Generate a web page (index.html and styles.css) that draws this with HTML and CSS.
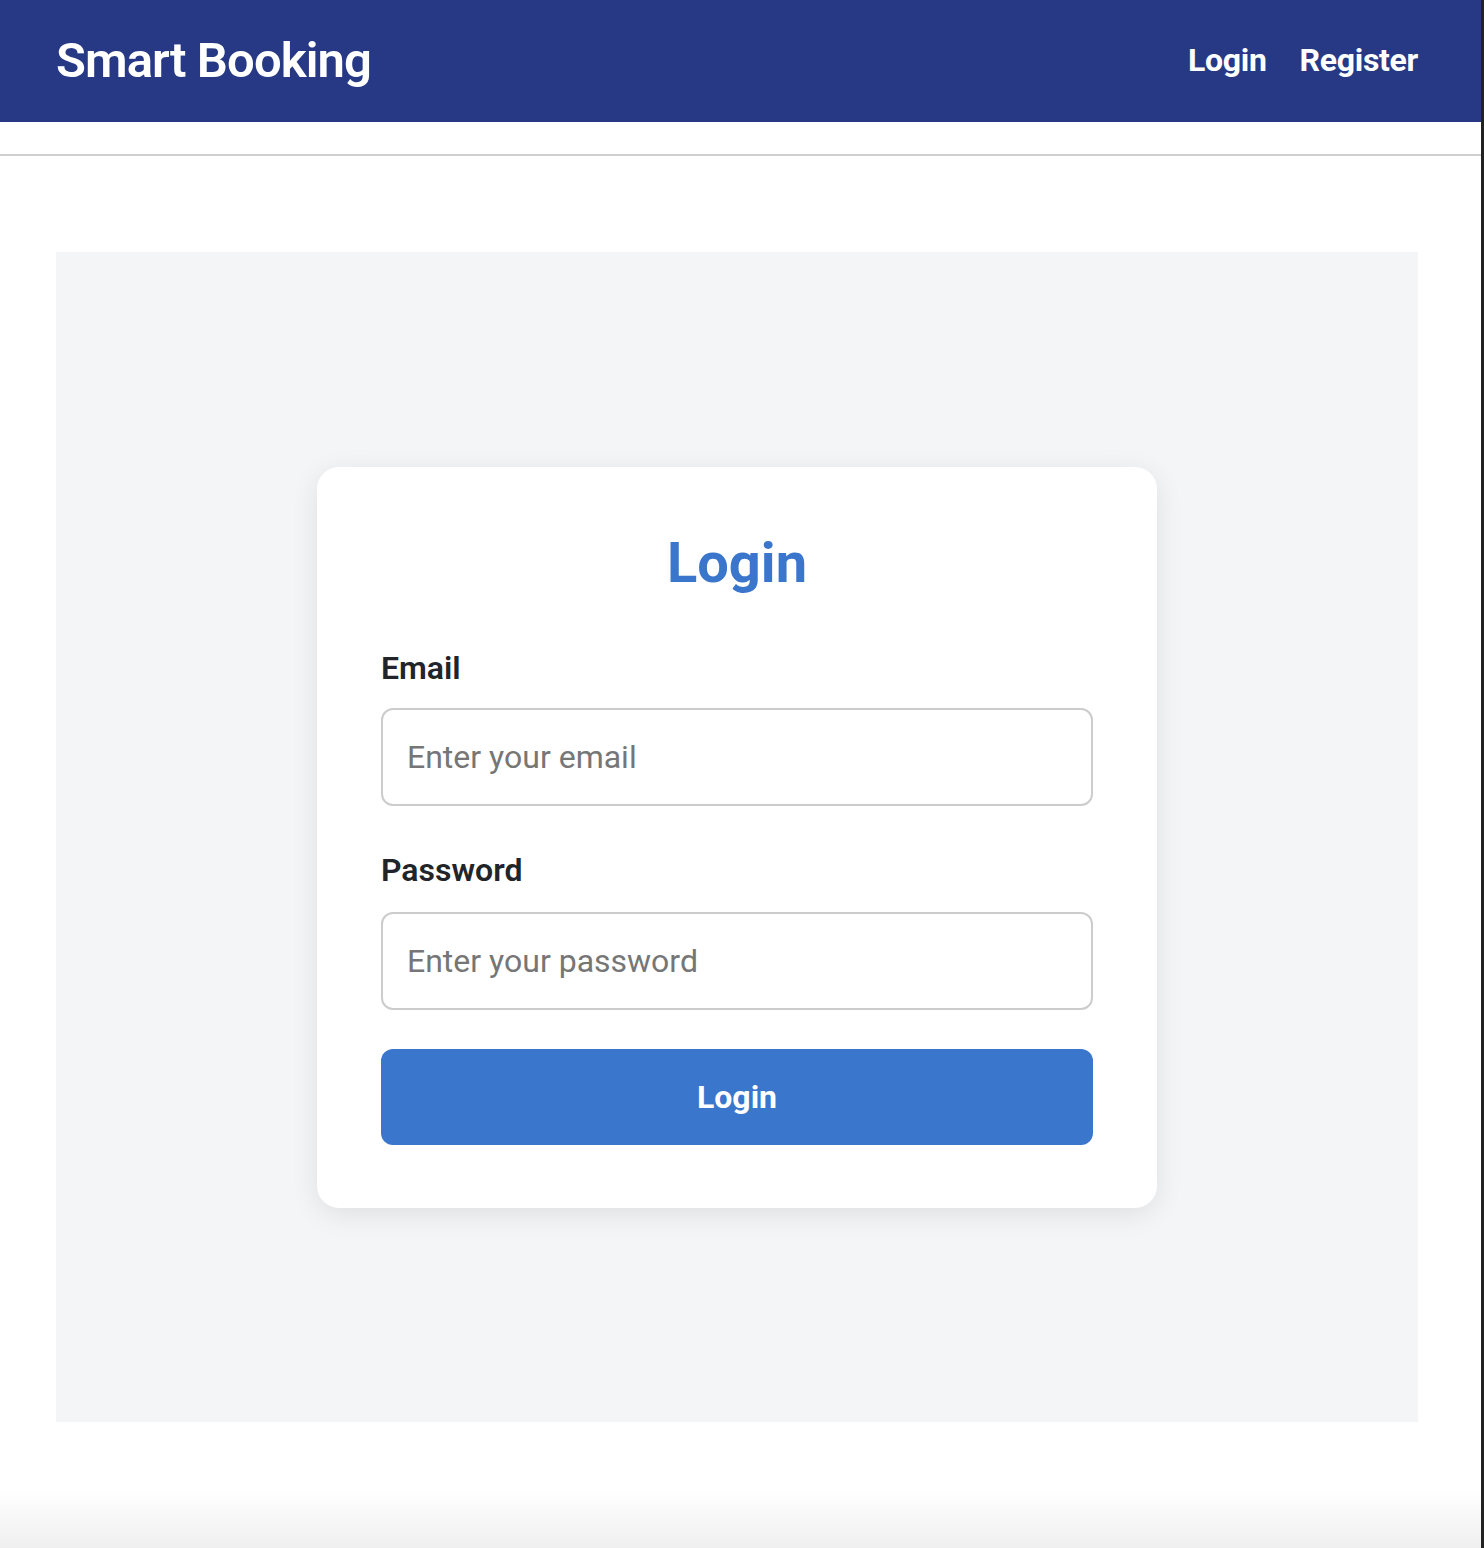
FILE: index.html
```html
<!DOCTYPE html>
<html lang="en">
<head>
<meta charset="utf-8">
<title>Smart Booking - Login</title>
<link rel="stylesheet" href="styles.css">
</head>
<body>
<div class="page">
  <header class="topbar">
    <div class="brand">Smart Booking</div>
    <nav class="nav">
      <a href="#" class="nav-link">Login</a>
      <a href="#" class="nav-link">Register</a>
    </nav>
  </header>
  <hr class="divider">
  <main class="panel">
    <div class="card">
      <h2 class="card-title">Login</h2>
      <form class="form">
        <label class="label" for="email">Email</label>
        <input class="input" id="email" type="email" placeholder="Enter your email">
        <label class="label label-second" for="password">Password</label>
        <input class="input" id="password" type="password" placeholder="Enter your password">
        <button type="button" class="btn">Login</button>
      </form>
    </div>
  </main>
</div>
</body>
</html>
```

FILE: styles.css
```css
* { box-sizing: border-box; }

html, body {
  margin: 0;
  padding: 0;
}

body {
  font-family: Roboto, "Liberation Sans", Arial, sans-serif;
  background: #fff;
  width: 1484px;
  height: 1548px;
  overflow: hidden;
}

.page {
  width: 1484px;
  height: 1548px;
  border-right: 3px solid #222;
  background: linear-gradient(to bottom, #fff 0, #fff 1490px, #efefef 1548px);
}

.topbar {
  height: 122px;
  background: #273985;
  display: flex;
  align-items: center;
  justify-content: space-between;
  padding: 0 63px 0 56px;
}

.brand {
  color: #fff;
  font-size: 49px;
  font-weight: 600;
  letter-spacing: -0.9px;
  margin-top: -2px;
}

.nav {
  display: flex;
  gap: 33px;
  margin-top: -2px;
}

.nav-link {
  color: #fff;
  text-decoration: none;
  font-size: 32px;
  font-weight: 700;
  letter-spacing: -0.3px;
}

.divider {
  margin: 32px 0 0 0;
  border: 0;
  height: 2px;
  background: #cfcfcf;
}

.panel {
  margin: 96px 63px 0 56px;
  height: 1170px;
  background: #f4f5f7;
  display: flex;
  align-items: center;
  justify-content: center;
}

.card {
  width: 840px;
  background: #fff;
  border-radius: 22px;
  padding: 62px 64px 63px;
  box-shadow: 0 6px 28px rgba(0, 0, 0, 0.09);
}

.card-title {
  margin: 0;
  text-align: center;
  color: #3a76cc;
  font-size: 56px;
  font-weight: 700;
  line-height: 68px;
}

.form {
  display: flex;
  flex-direction: column;
  margin-top: 52px;
}

.label {
  font-size: 32px;
  font-weight: 600;
  color: #212529;
  line-height: 38px;
  margin-bottom: 21px;
}

.label-second {
  margin-top: 45px;
  margin-bottom: 23px;
}

.input {
  height: 98px;
  border: 2px solid #cccccc;
  border-radius: 12px;
  padding: 0 24px;
  font-family: Roboto, "Liberation Sans", Arial, sans-serif;
  font-size: 32px;
  color: #333;
  background: #fff;
  outline: none;
}

.input::placeholder {
  color: #767676;
}

.btn {
  margin-top: 39px;
  height: 96px;
  border: 0;
  border-radius: 12px;
  background: #3a76cc;
  color: #fff;
  font-family: Roboto, "Liberation Sans", Arial, sans-serif;
  font-size: 32px;
  font-weight: 700;
  cursor: pointer;
}
```
